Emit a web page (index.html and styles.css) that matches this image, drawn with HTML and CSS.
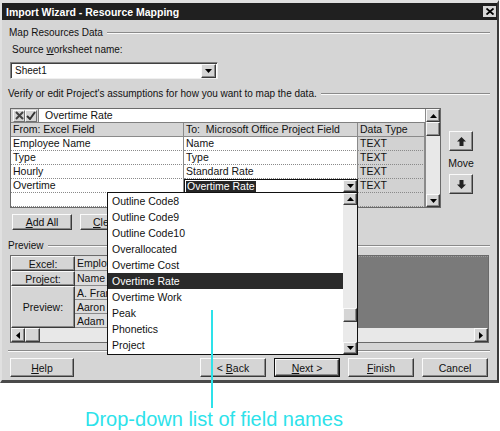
FILE: index.html
```html
<!DOCTYPE html>
<html>
<head>
<meta charset="utf-8">
<title>Import Wizard - Resource Mapping</title>
<link rel="stylesheet" href="styles.css">
</head>
<body>
<div class="dialog">
  <div class="titlebar">
    <span class="title">Import Wizard - Resource Mapping</span>
    <span class="close"><svg width="8" height="7" viewBox="0 0 8 7"><path d="M0.5 0.5 L7.5 6.5 M7.5 0.5 L0.5 6.5" stroke="#000" stroke-width="1.8"/></svg></span>
  </div>
  <div class="body">
    <div class="group-head first"><span>Map Resources Data</span><i class="rule"></i></div>
    <div class="label">Source <u>w</u>orksheet name:</div>
    <div class="combo sheet">
      <span class="combo-text">Sheet1</span>
      <span class="raised dd-btn"><svg width="7" height="4" viewBox="0 0 7 4"><path d="M0 0 H7 L3.5 4 Z" fill="#000"/></svg></span>
    </div>
    <div class="group-head verify"><span>Verify or edit Project's assumptions for how you want to map the data.</span><i class="rule"></i></div>

    <div class="map-row">
      <div class="grid-wrap">
        <div class="grid-main">
          <div class="editbar">
            <span class="eicons">
              <span class="eicon"><svg width="9" height="9" viewBox="0 0 9 9"><path d="M1 1 L8 8 M8 1 L1 8" stroke="#444" stroke-width="2"/></svg></span>
              <span class="eicon"><svg width="10" height="9" viewBox="0 0 10 9"><path d="M1 5 L4 8 L9 1" fill="none" stroke="#333" stroke-width="2"/></svg></span>
            </span>
            <span class="etext">Overtime Rate</span>
          </div>
          <div class="grid">
            <div class="cell h">From: Excel Field</div>
            <div class="cell h">To:&nbsp; Microsoft Office Project Field</div>
            <div class="cell h dt">Data Type</div>

            <div class="cell">Employee Name</div>
            <div class="cell">Name</div>
            <div class="cell dt">TEXT</div>

            <div class="cell">Type</div>
            <div class="cell">Type</div>
            <div class="cell dt">TEXT</div>

            <div class="cell">Hourly</div>
            <div class="cell">Standard Rate</div>
            <div class="cell dt">TEXT</div>

            <div class="cell">Overtime</div>
            <div class="cell combo-cell">
              <span class="sel-text">Overtime Rate</span>
              <span class="raised dd-btn small"><svg width="7" height="4" viewBox="0 0 7 4"><path d="M0 0 H7 L3.5 4 Z" fill="#000"/></svg></span>
            </div>
            <div class="cell dt">TEXT</div>

            <div class="cell"></div>
            <div class="cell"></div>
            <div class="cell dt"></div>
          </div>
        </div>
        <div class="vscroll">
          <span class="raised sb-btn"><svg width="7" height="4" viewBox="0 0 7 4"><path d="M0 4 H7 L3.5 0 Z" fill="#000"/></svg></span>
          <span class="raised sb-thumb"></span>
          <span class="sb-track"></span>
          <span class="raised sb-btn"><svg width="7" height="4" viewBox="0 0 7 4"><path d="M0 0 H7 L3.5 4 Z" fill="#000"/></svg></span>
        </div>
      </div>
      <div class="move">
        <span class="raised mbtn up"><svg width="9" height="9" viewBox="0 0 9 9"><path d="M4.5 0 L9 4.5 L6.5 4.5 L6.5 9 L2.5 9 L2.5 4.5 L0 4.5 Z" fill="#222"/></svg></span>
        <span class="move-label">Move</span>
        <span class="raised mbtn down"><svg width="9" height="9" viewBox="0 0 9 9"><path d="M4.5 9 L9 4.5 L6.5 4.5 L6.5 0 L2.5 0 L2.5 4.5 L0 4.5 Z" fill="#222"/></svg></span>
      </div>
    </div>

    <div class="btn-row">
      <span class="raised btn"><span><u>A</u>dd All</span></span>
      <span class="raised btn clear"><span><u>C</u>lear All</span></span>
    </div>

    <div class="group-head preview-head"><span>Preview</span><i class="rule"></i></div>
    <div class="preview">
      <div class="pv-body">
        <div class="pv-heads">
          <span class="raised pv-h r1">Excel:</span>
          <span class="raised pv-h r2">Project:</span>
          <span class="raised pv-h r3">Preview:</span>
        </div>
        <div class="pv-cols">
          <span class="pv-c r1">Employ</span>
          <span class="pv-c r2">Name</span>
          <span class="pv-c">A. Fran</span>
          <span class="pv-c">Aaron</span>
          <span class="pv-c">Adam B</span>
        </div>
        <div class="pv-hidden"></div>
        <div class="pv-empty"></div>
      </div>
      <div class="hscroll">
        <span class="raised hb"><svg width="4" height="7" viewBox="0 0 4 7"><path d="M0 3.5 L4 0 V7 Z" fill="#000"/></svg></span>
        <span class="raised hthumb"></span>
        <span class="htrack"></span>
        <span class="raised hb"><svg width="4" height="7" viewBox="0 0 4 7"><path d="M4 3.5 L0 0 V7 Z" fill="#000"/></svg></span>
      </div>
    </div>

    <div class="sep"></div>
    <div class="footer">
      <span class="raised fbtn help"><span><u>H</u>elp</span></span>
      <span class="raised fbtn back"><span>&lt; <u>B</u>ack</span></span>
      <span class="fbtn default"><span class="raised inner"><span><u>N</u>ext &gt;</span></span></span>
      <span class="raised fbtn"><span><u>F</u>inish</span></span>
      <span class="raised fbtn"><span>Cancel</span></span>
    </div>
  </div>

  <div class="droplist">
    <div class="items">
      <div class="item">Outline Code8</div>
      <div class="item">Outline Code9</div>
      <div class="item">Outline Code10</div>
      <div class="item">Overallocated</div>
      <div class="item">Overtime Cost</div>
      <div class="item sel">Overtime Rate</div>
      <div class="item">Overtime Work</div>
      <div class="item">Peak</div>
      <div class="item">Phonetics</div>
      <div class="item">Project</div>
    </div>
    <div class="lscroll">
      <span class="raised lbtn"><svg width="7" height="4" viewBox="0 0 7 4"><path d="M0 4 H7 L3.5 0 Z" fill="#000"/></svg></span>
      <span class="raised lthumb"></span>
      <span class="ltrack"></span>
      <span class="raised lbtn"><svg width="7" height="4" viewBox="0 0 7 4"><path d="M0 0 H7 L3.5 4 Z" fill="#000"/></svg></span>
    </div>
  </div>
</div>
<div class="annot-line"></div>
<div class="annot">Drop-down list of field names</div>
</body>
</html>
```

FILE: styles.css
```css
* { box-sizing: border-box; }
html, body { margin: 0; padding: 0; background: #fff; }
body {
  position: relative;
  width: 500px;
  height: 431px;
  overflow: hidden;
  font-family: "Liberation Sans", Arial, sans-serif;
  font-size: 10px;
  color: #111;
}
u { text-decoration: underline; text-underline-offset: 1px; }

.raised {
  background: #d5d5d5;
  border: 1px solid;
  border-color: #fafafa #3a3a3a #3a3a3a #fafafa;
  box-shadow: inset -1px -1px #8a8a8a;
  display: flex;
  align-items: center;
  justify-content: center;
}

.dialog {
  position: relative;
  width: 499px;
  height: 383px;
  background: #d5d5d5;
  border-style: solid;
  border-width: 3px 2px 3px 2px;
  border-color: #e0e0e0 #3a3a3a #4a4a4a #e0e0e0;
  display: flex;
  flex-direction: column;
}

.titlebar {
  height: 17px;
  background: #202020;
  color: #fff;
  font-weight: bold;
  font-size: 10.5px;
  display: flex;
  align-items: center;
  padding-left: 4px;
}
.title { flex: 1; }
.close {
  width: 13px;
  height: 11px;
  margin-right: 1px;
  background: #d8d8d8;
  display: flex;
  align-items: center;
  justify-content: center;
}

.body {
  display: flex;
  flex-direction: column;
  padding-left: 6px;
}

.group-head {
  display: flex;
  align-items: center;
  height: 12px;
  line-height: 12px;
  white-space: nowrap;
}
.group-head.first { margin-top: 7px; margin-left: 1px; }
.group-head.verify { margin-top: 9px; }
.group-head.preview-head { margin-top: 10px; }
.rule {
  flex: 1;
  height: 2px;
  border-top: 1px solid #8a8a8a;
  border-bottom: 1px solid #fafafa;
  margin-left: 4px;
  margin-right: 7px;
}

.label {
  margin-top: 5px;
  padding-left: 4px;
  height: 12px;
  line-height: 12px;
}

.combo.sheet {
  margin-top: 6px;
  margin-left: 2px;
  width: 208px;
  height: 17px;
  background: #fff;
  border: 1px solid;
  border-color: #808080 #f0f0f0 #f0f0f0 #808080;
  box-shadow: inset 1px 1px #404040;
  display: flex;
  align-items: center;
  padding-left: 4px;
}
.combo-text { flex: 1; }
.dd-btn { width: 15px; height: 14px; margin-right: 1px; }
.dd-btn.small { width: 14px; height: 12px; margin-right: 0; }

.map-row {
  margin-top: 8px;
  display: flex;
  align-items: flex-start;
}
.grid-wrap {
  margin-left: 2px;
  width: 431px;
  height: 100px;
  border: 1px solid #6a6a6a;
  display: flex;
  background: #fff;
}
.grid-main {
  width: 414px;
  display: flex;
  flex-direction: column;
}
.editbar {
  height: 14px;
  display: flex;
  border-bottom: 1px solid #808080;
}
.eicons {
  width: 27px;
  background: #d5d5d5;
  display: flex;
  align-items: center;
  padding-left: 2px;
}
.eicon {
  width: 12px;
  height: 12px;
  display: flex;
  align-items: center;
  justify-content: center;
  border: 1px solid;
  border-color: #fafafa #707070 #707070 #fafafa;
}
.etext {
  flex: 1;
  background: #fff;
  border-left: 1px solid #808080;
  padding-left: 6px;
  line-height: 13px;
  font-size: 10.5px;
}
.grid {
  display: grid;
  grid-template-columns: 173px 174px 67px;
  grid-auto-rows: 14px;
}
.cell {
  background: #fff;
  border-right: 1px solid #8a8a8a;
  border-bottom: 1px dotted #8a8a8a;
  padding-left: 2px;
  line-height: 13px;
  white-space: nowrap;
  overflow: hidden;
  font-size: 10.5px;
}
.cell.h { background: #d5d5d5; border-bottom: 1px solid #8a8a8a; }
.cell.dt { background: #d2d2d2; }
.cell.combo-cell {
  border: 1px solid #111;
  padding-left: 1px;
  display: flex;
  align-items: center;
  justify-content: space-between;
  overflow: visible;
}
.sel-text {
  background: #262626;
  color: #fff;
  line-height: 11px;
  padding: 0 1px;
}

.vscroll {
  width: 15px;
  display: flex;
  flex-direction: column;
  background: #e8e8e8;
  border-left: 1px solid #8a8a8a;
}
.sb-btn { height: 13px; }
.sb-thumb { height: 14px; }
.sb-track { flex: 1; }

.move {
  margin-left: 8px;
  width: 24px;
  display: flex;
  flex-direction: column;
  align-items: center;
}
.mbtn { width: 24px; height: 20px; }
.mbtn.up { margin-top: 23px; }
.move-label { margin-top: 6px; height: 12px; line-height: 12px; font-size: 10.5px; }
.mbtn.down { margin-top: 5px; }

.btn-row {
  margin-top: 6px;
  display: flex;
  gap: 8px;
  padding-left: 4px;
}
.btn { width: 60px; height: 16px; font-size: 10.5px; white-space: nowrap; }
.btn.clear { justify-content: flex-start; padding-left: 12px; }

.preview {
  margin-top: 3px;
  margin-left: 2px;
  width: 479px;
  border: 1px solid #6a6a6a;
  display: flex;
  flex-direction: column;
}
.pv-body { height: 72px; display: flex; }
.pv-heads { width: 64px; display: flex; flex-direction: column; }
.pv-h { font-size: 10.5px; }
.pv-h.r1, .pv-h.r2 { height: 15px; }
.pv-h.r3 { flex: 1; }
.pv-cols {
  width: 32px;
  display: grid;
  grid-template-rows: 15px 15px 14px 14px 14px;
  background: #dcdcdc;
}
.pv-c {
  border-bottom: 1px solid #8a8a8a;
  padding-left: 2px;
  line-height: 14px;
  white-space: nowrap;
  overflow: hidden;
  font-size: 10.5px;
}
.pv-hidden { width: 250px; background: #dcdcdc; }
.pv-empty {
  flex: 1;
  background: #7a7a7a;
  border-top: 1px dotted #9a9a9a;
}
.hscroll {
  height: 14px;
  display: flex;
  background: #e8e8e8;
}
.hb { width: 14px; }
.hthumb { width: 15px; }
.htrack { flex: 1; }

.sep {
  margin-top: 7px;
  height: 2px;
  border-top: 1px solid #8a8a8a;
  border-bottom: 1px solid #fafafa;
  margin-right: 7px;
}
.footer {
  margin-top: 6px;
  height: 19px;
  display: flex;
  gap: 8px;
  padding-left: 2px;
  padding-right: 9px;
}
.fbtn { width: 66px; height: 19px; font-size: 10.5px; white-space: pre; }
.fbtn.help { width: 64px; }
.fbtn.back { margin-left: auto; }
.fbtn.default {
  border: 1px solid #111;
  display: flex;
}
.fbtn.default .inner { flex: 1; }

.droplist {
  position: absolute;
  left: 105px;
  top: 189px;
  width: 251px;
  height: 163px;
  background: #fff;
  border: 1px solid #111;
  display: flex;
  z-index: 2;
}
.items { flex: 1; }
.item {
  height: 16px;
  line-height: 16px;
  padding-left: 4px;
  font-size: 10.5px;
  white-space: nowrap;
}
.item.sel { background: #2a2a2a; color: #fff; }
.lscroll {
  width: 14px;
  display: flex;
  flex-direction: column;
  background: #eaeaea;
}
.lbtn { height: 12px; }
.lthumb { height: 14px; margin-top: 103px; }
.ltrack { flex: 1; }

.annot-line {
  position: absolute;
  left: 211px;
  top: 310px;
  width: 2px;
  height: 98px;
  background: #2de2ea;
  z-index: 3;
}
.annot {
  margin-top: 25px;
  margin-left: 85px;
  font-size: 20px;
  line-height: 23px;
  color: #2de2ea;
  white-space: nowrap;
}
```
